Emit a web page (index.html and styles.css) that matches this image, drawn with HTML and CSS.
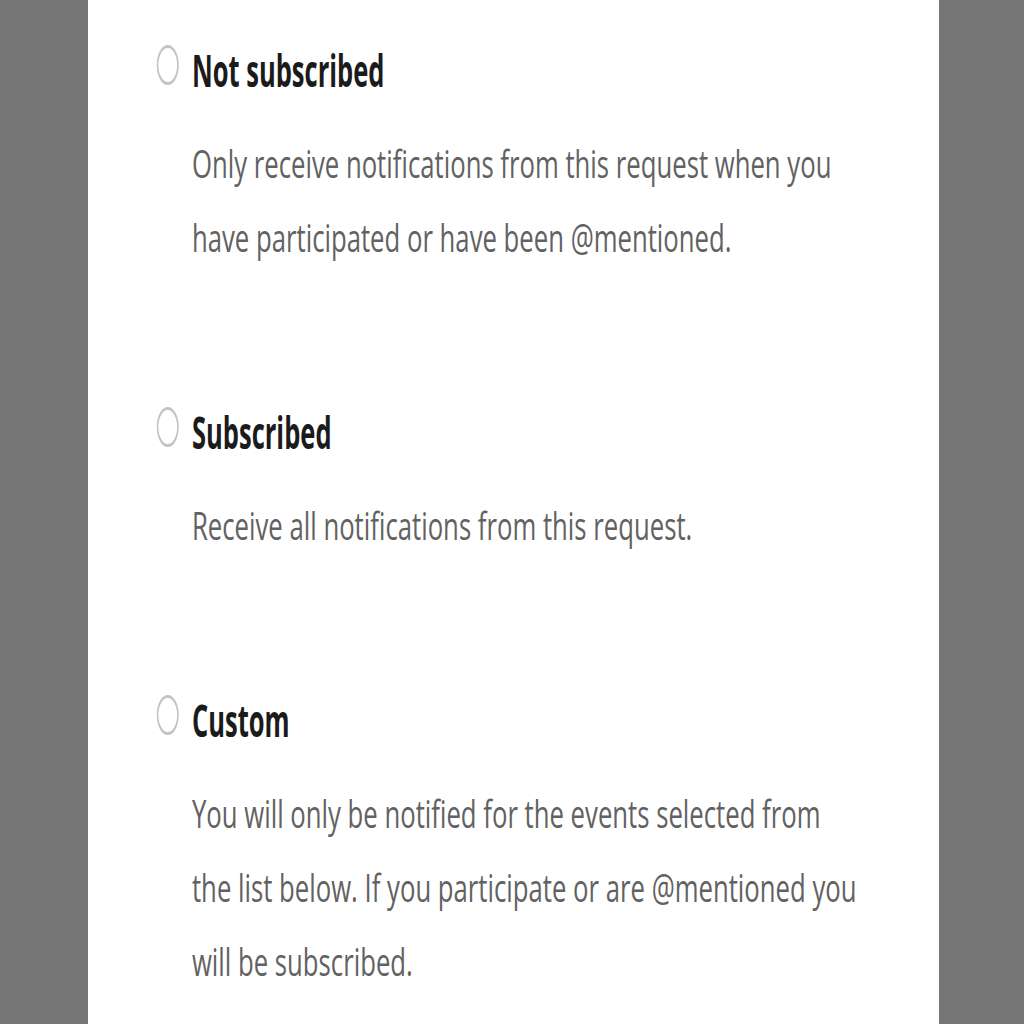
FILE: index.html
```html
<!DOCTYPE html>
<html>
<head>
<meta charset="utf-8">
<link rel="stylesheet" href="styles.css">
</head>
<body>
<div class="panel">
  <div class="content">
    <div class="option">
      <span class="radio"></span>
      <div class="title">Not subscribed</div>
      <div class="desc">Only receive notifications from this request when you<br>have participated or have been @mentioned.</div>
    </div>
    <div class="option">
      <span class="radio"></span>
      <div class="title">Subscribed</div>
      <div class="desc">Receive all notifications from this request.</div>
    </div>
    <div class="option">
      <span class="radio"></span>
      <div class="title">Custom</div>
      <div class="desc">You will only be notified for the events selected from<br>the list below. If you participate or are @mentioned you<br>will be subscribed.</div>
    </div>
  </div>
</div>
</body>
</html>
```
FILE: styles.css
```css
html, body {
  margin: 0;
  padding: 0;
  background: #767676;
  height: 1024px;
  overflow: hidden;
}
.panel {
  margin-left: 88px;
  width: 851px;
  height: 1024px;
  background: #ffffff;
  overflow: hidden;
}
.content {
  padding-top: 45px;
  padding-left: 125px;
  width: 1400px;
  transform: scaleX(0.55);
  transform-origin: 0 0;
  font-family: "Open Sans", "Noto Sans", sans-serif;
  display: flex;
  flex-direction: column;
  gap: 133px;
}
.option {
  display: grid;
  grid-template-columns: 40px 1fr;
  column-gap: 24px;
  row-gap: 31px;
  align-items: start;
}
.radio {
  width: 40px;
  height: 40px;
  box-sizing: border-box;
  border: 3px solid #c4c4c4;
  border-radius: 50%;
  grid-row: 1;
  grid-column: 1;
}
.title {
  grid-column: 2;
  font-size: 44px;
  line-height: 50px;
  font-weight: 700;
  color: #1b1b1b;
  transform: scaleX(1.055);
  transform-origin: 0 0;
}
.desc {
  grid-column: 2;
  font-size: 38px;
  line-height: 74px;
  color: #626262;
  white-space: nowrap;
  transform: scaleX(1.23);
  transform-origin: 0 0;
}
```
